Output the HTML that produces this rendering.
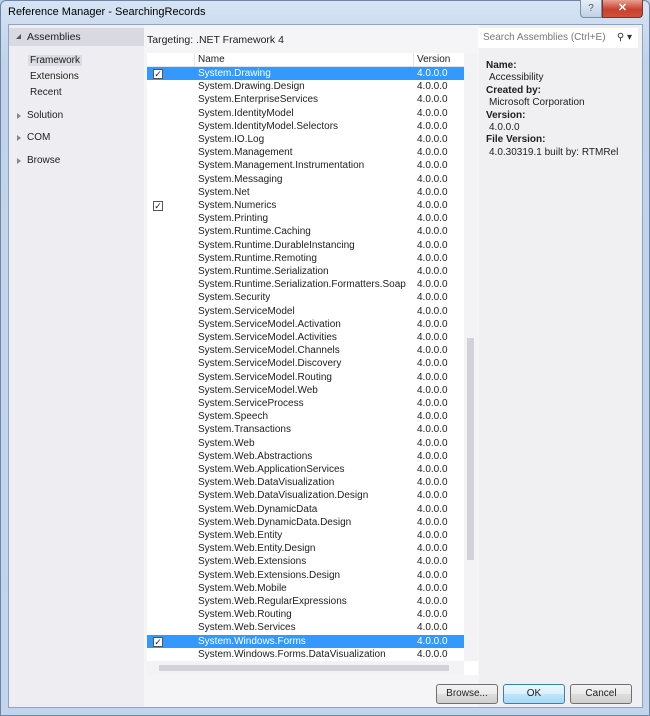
<!DOCTYPE html>
<html><head><style>
*{margin:0;padding:0;box-sizing:border-box}
body{width:650px;height:716px;overflow:hidden;background:#bcd0e8;font-family:"Liberation Sans",sans-serif;font-size:10px;color:#1e1e1e;position:relative}
.frame{position:absolute;left:0;top:0;width:650px;height:716px;background:linear-gradient(#d6e4f4,#bfd3ea 60px,#c2d5ec);border:1px solid #6e86a4;border-radius:6px 6px 0 0}
.title{position:absolute;left:8px;top:6px;font-size:11px;color:#000}
.help{position:absolute;left:580px;top:0;width:22px;height:18px;background:linear-gradient(#e6eef8,#c0d0e4);border:1px solid #7890ad;border-top:none;border-radius:0 0 0 4px;text-align:center;font-size:10px;line-height:17px;color:#556}
.close{position:absolute;left:602px;top:0;width:41px;height:18px;background:linear-gradient(#e8a090,#c8412e 55%,#d0503a);border:1px solid #6e3a30;border-top:none;border-radius:0 0 4px 0;text-align:center;color:#fff;font-weight:bold;font-size:11px;line-height:17px}
.client{position:absolute;left:8px;top:24px;width:635px;height:684px;background:#f0f0f3;border:1px solid #8ea4c0}
.nav{position:absolute;left:0;top:0;width:135px;height:682px;background:#eeeef2}
.navh{position:absolute;left:0;top:3px;width:135px;height:18px;background:#d9d9e2;line-height:18px;padding-left:18px;font-size:10.5px}
.navh:before{content:"";position:absolute;left:7px;top:6px;border-left:5px solid transparent;border-bottom:5px solid #555}
.sub{position:absolute;left:21px;font-size:10px}
.sel{background:#dcdce4;padding:0 2px;left:19px}
.tri{position:absolute;left:18px;font-size:10px}
.tri:before{content:"";position:absolute;left:-10px;top:3px;border-top:3.5px solid transparent;border-bottom:3.5px solid transparent;border-left:4px solid #888}
.mid{position:absolute;left:135px;top:0;width:335px;height:682px;background:#f5f5f7}
.target{position:absolute;left:147px;top:34px;font-size:10.5px}
.list{position:absolute;left:147px;top:53px;width:331px;height:622px;background:#fff}
.hdr{position:absolute;left:0;top:0;width:317px;height:14px;border-bottom:1px solid #e4e4e8}
.hdr span{position:absolute;top:1px}
.vs{position:absolute;left:317px;top:0;width:14px;height:608px;background:#f3f3f5}
.thumb{position:absolute;left:3px;top:285px;width:7px;height:222px;background:#d2d2d8}
.hs{position:absolute;left:0;top:608px;width:317px;height:14px;background:#f3f3f5}
.hth{position:absolute;left:12px;top:4px;width:290px;height:6px;background:#d2d2d8}
.row{position:absolute;left:0;width:317px;height:13.2px;line-height:13.2px}
.row .n{position:absolute;left:51px}
.row .v{position:absolute;left:270px}
.row.s{background:#3399ff;color:#fff}
.cb{position:absolute;left:6px;top:2px;width:10px;height:10px;background:#fff;border:1px solid #555;font-size:9px;line-height:8px;text-align:center;color:#223}
.search{position:absolute;left:478px;top:28px;width:160px;height:20px;background:#fff;color:#777;font-size:10px;line-height:20px;padding-left:5px}
.info{position:absolute;left:486px;top:60px;font-size:10px;line-height:12.4px}
.info b{display:block}
.info div{padding-left:3px}
.btn{position:absolute;top:684px;height:20px;border:1px solid #707070;border-radius:3px;background:linear-gradient(#f2f2f2,#ebebeb 50%,#dddddd 51%,#cfcfcf);text-align:center;line-height:18px;font-size:10px}
</style></head><body>
<div class="frame"></div>
<div class="title">Reference Manager - SearchingRecords</div>
<div class="help">?</div>
<div class="close">✕</div>
<div class="client">
<div class="nav">
<div class="navh">Assemblies</div>
<div class="sub sel" style="top:30px">Framework</div>
<div class="sub" style="top:46px">Extensions</div>
<div class="sub" style="top:62px">Recent</div>
<div class="tri" style="top:85px">Solution</div>
<div class="tri" style="top:107px">COM</div>
<div class="tri" style="top:130px">Browse</div>
</div>
<div class="mid"></div>
</div>
<div class="search">Search Assemblies (Ctrl+E)<span style="position:absolute;right:6px;color:#333">⚲ ▾</span></div>
<div class="target">Targeting: .NET Framework 4</div>
<div class="list">
<div class="hdr"><span style="left:51px">Name</span><span style="left:270px">Version</span><span style="position:absolute;left:266px;top:0;height:14px;border-left:1px solid #e4e4e8"></span><span style="position:absolute;left:47px;top:0;height:14px;border-left:1px solid #e4e4e8"></span></div>
<div id="rows"></div>
<div class="vs"><div class="thumb"></div></div>
<div class="hs"><div class="hth"></div></div>
</div>
<div class="info">
<b>Name:</b><div>Accessibility</div>
<b>Created by:</b><div>Microsoft Corporation</div>
<b>Version:</b><div>4.0.0.0</div>
<b>File Version:</b><div>4.0.30319.1 built by: RTMRel</div>
</div>
<div class="btn" style="left:436px;width:62px">Browse...</div>
<div class="btn" style="left:503px;width:62px;border-color:#3c7fb1;background:linear-gradient(#eaf6fd,#d9f0fc 50%,#bee6fd 51%,#a7d9f5)">OK</div>
<div class="btn" style="left:570px;width:62px">Cancel</div>
<script>
var n=["System.Drawing","System.Drawing.Design","System.EnterpriseServices","System.IdentityModel","System.IdentityModel.Selectors","System.IO.Log","System.Management","System.Management.Instrumentation","System.Messaging","System.Net","System.Numerics","System.Printing","System.Runtime.Caching","System.Runtime.DurableInstancing","System.Runtime.Remoting","System.Runtime.Serialization","System.Runtime.Serialization.Formatters.Soap","System.Security","System.ServiceModel","System.ServiceModel.Activation","System.ServiceModel.Activities","System.ServiceModel.Channels","System.ServiceModel.Discovery","System.ServiceModel.Routing","System.ServiceModel.Web","System.ServiceProcess","System.Speech","System.Transactions","System.Web","System.Web.Abstractions","System.Web.ApplicationServices","System.Web.DataVisualization","System.Web.DataVisualization.Design","System.Web.DynamicData","System.Web.DynamicData.Design","System.Web.Entity","System.Web.Entity.Design","System.Web.Extensions","System.Web.Extensions.Design","System.Web.Mobile","System.Web.RegularExpressions","System.Web.Routing","System.Web.Services","System.Windows.Forms","System.Windows.Forms.DataVisualization"];
var h="";n.forEach(function(x,i){var s=(i==0||i==43),c=(i==0||i==10||i==43);
h+='<div class="row'+(s?' s':'')+'" style="top:'+(14+i*13.2)+'px">'+(c?'<div class="cb">✓</div>':'')+'<span class="n">'+x+'</span><span class="v">4.0.0.0</span></div>';});
document.getElementById("rows").innerHTML=h;
</script>
</body></html>
